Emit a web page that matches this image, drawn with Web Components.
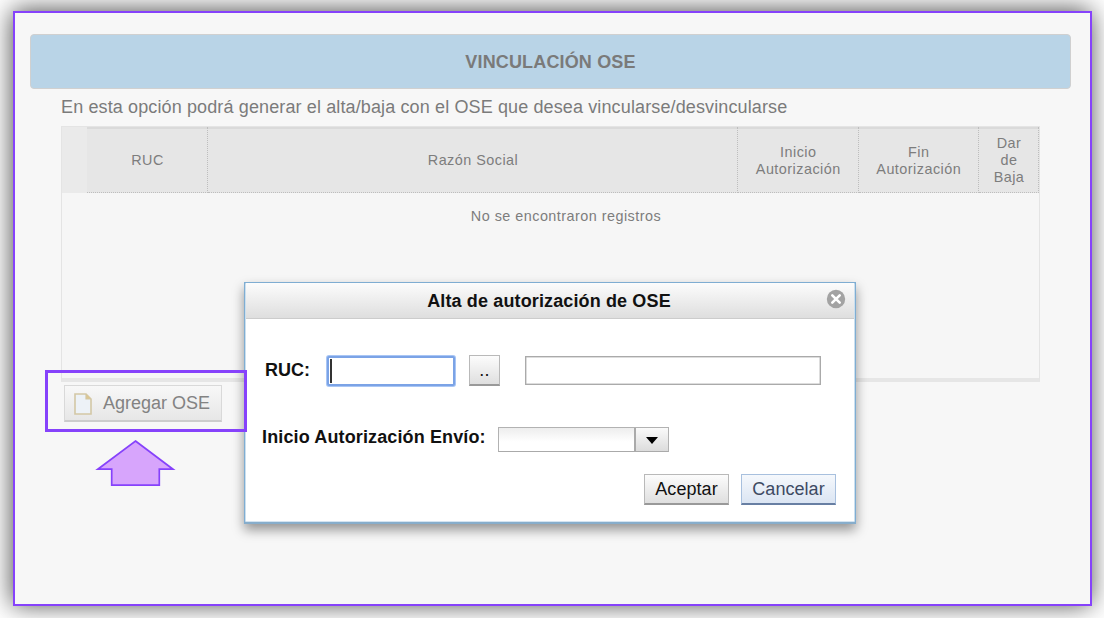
<!DOCTYPE html>
<html lang="es">
<head>
<meta charset="utf-8">
<title>Vinculación OSE</title>
<style>
html,body{margin:0;width:1104px;height:618px;overflow:hidden;background:#fff;font-family:"Liberation Sans",Arial,sans-serif}
</style>
</head>
<body>
<ose-page></ose-page>
<script>
const define = (name, html) => {
  const template = document.createElement('template');
  template.innerHTML = html;
  customElements.define(name, class extends HTMLElement {
    constructor() {
      super();
      this.attachShadow({mode: 'open'}).appendChild(template.content.cloneNode(true));
    }
  });
};

define('ose-banner', `
<style>
:host{display:flex;align-items:center;justify-content:center;box-sizing:border-box;width:1041px;height:55px;border:1px solid #d0d0d0;border-radius:4px;background:#b9d4e7;color:#7a7a7a;font-weight:bold;font-size:18px;letter-spacing:.15px;padding-top:1px}
</style><slot></slot>`);

define('ose-table', `
<style>
:host{display:block;box-sizing:border-box;width:979px;height:256px;border:1px solid #e4e4e4;border-bottom:4px solid #e6e6e6;background:#f6f6f6;color:#7d7d7d;font-size:14.4px;letter-spacing:.47px;line-height:16.7px}
.head{display:grid;grid-template-columns:25px 121px 530px 120.5px 120.5px 60px;height:66px;background:#eaeaea}
.head div{box-sizing:border-box;display:flex;align-items:center;justify-content:center;text-align:center;background:#e6e6e6;border:0 dotted #bdbdbd;border-width:0 1px 1px 0;box-shadow:inset 0 2px #dadada;padding:2px 0 0 1px}
.head div:first-child{background:#eaeaea;border:0;box-shadow:none}
.empty{padding:15px 0 0 31px;text-align:center}
</style>
<div class="head"><div></div><div>RUC</div><div>Razón Social</div><div>Inicio<br>Autorización</div><div>Fin<br>Autorización</div><div>Dar<br>de<br>Baja</div></div>
<div class="empty"><slot></slot></div>`);

define('ose-add', `
<style>
:host{display:flex;align-items:center;box-sizing:border-box;width:158px;height:37px;padding-left:9px;gap:11px;border:1px solid #d9d9d9;border-bottom:2px solid #ccc;background:linear-gradient(#f8f8f8,#e7e7e7);color:#828282;font-size:18px}
svg{display:block;flex:none;margin-top:1px}
span{padding-top:1px}
</style>
<svg width="18" height="22" viewBox="0 0 18 22"><path d="M1 1h11l5 5v15H1z" fill="#edf2f7" stroke="#d3c7a5" stroke-width="1.6"/><path d="M12 1v5h5" fill="#ddc791" stroke="#d3c7a5" stroke-width="1.2"/></svg>
<span><slot></slot></span>`);

define('ose-button', `
<style>
:host{display:flex;align-items:center;justify-content:center;box-sizing:border-box;height:31px;border:1px solid #b9b9b9;border-bottom:2px solid #999;background:linear-gradient(#fcfcfc,#dfdfdf);color:#111;font-size:18px;padding-top:1px}
:host([primary]){border-color:#a8c0de;border-bottom-color:#687fa3;background:linear-gradient(#f5f8fc,#dbe5f3);color:#3d4a63}
</style><slot></slot>`);

define('ose-input', `
<style>
:host{display:block;box-sizing:border-box;height:29px;border:1px solid #aaa;box-shadow:inset 0 0 0 .5px #bbb;background:#fff}
:host([focused]){height:30px;border:2px solid #7ba3e6;border-radius:2px;box-shadow:0 0 0 1px #a9c6f5;padding:1px 0 0 1px}
i{display:none}
:host([focused]) i{display:block;width:2px;height:24px;background:#333}
</style><i></i>`);

define('ose-combo', `
<style>
:host{display:flex;box-sizing:border-box;width:171px;height:25px;border:1px solid #b2b2b2;border-bottom-color:#aaa;background:linear-gradient(#ededed,#fff 60%)}
div{margin-left:auto;width:34px;box-sizing:border-box;border-left:2px solid #aaa;background:linear-gradient(#fafafa,#dcdcdc);display:flex;align-items:center;justify-content:center;padding:2px 1px 0 0}
svg{display:block}
</style><div><svg width="12" height="7"><path d="M0 0h12L6 7z"/></svg></div>`);

define('ose-dialog', `
<style>
:host{display:flex;flex-direction:column;box-sizing:border-box;width:612px;height:242px;border:1px solid #7fadd2;border-bottom:2px solid #87adcb;background:#fff;box-shadow:inset 0 0 0 .6px #a9cae3,0 6px 11px rgba(0,0,0,.4);color:#111;font-size:18px;font-weight:bold;letter-spacing:.13px}
header{display:flex;box-sizing:border-box;height:36px;margin:0 1px;border-bottom:1px solid #ccc;background:linear-gradient(#fcfcfc,#dedede);align-items:center;padding:1px 8px 0 26px}
h2{font:inherit;flex:1;text-align:center;margin:0}
header svg{display:block;margin-top:-5px}
.row{display:flex;align-items:flex-start}
.ruc{padding:37px 0 0 20px;height:71px;box-sizing:border-box}
.ruc span{width:62px;padding-top:4px;letter-spacing:0}
.date{padding:37px 0 0 17px;height:84px;box-sizing:border-box}
.date span{width:236px}
.actions{justify-content:flex-end;gap:12px;padding-right:19px;font-weight:normal;letter-spacing:.05px}
</style>
<header><h2>Alta de autorización de OSE</h2><svg width="20" height="20" viewBox="0 0 20 20"><circle cx="10" cy="10" r="9.2" fill="#a3a3a3"/><path d="M6.3 6.3l7.4 7.4m0-7.4l-7.4 7.4" stroke="#fff" stroke-width="2.6" stroke-linecap="round"/></svg></header>
<div class="row ruc"><span>RUC:</span><ose-input focused style="width:128px"></ose-input><ose-button style="width:31px;margin:-1px 25px 0 14px;font-weight:normal">..</ose-button><ose-input style="width:296px"></ose-input></div>
<div class="row date"><span>Inicio Autorización Envío:</span><ose-combo></ose-combo></div>
<div class="row actions"><ose-button style="width:85px">Aceptar</ose-button><ose-button primary style="width:95px">Cancelar</ose-button></div>`);

define('ose-callout', `
<style>
:host{display:block;width:202px}
.box{box-sizing:border-box;width:202px;height:62px;border:3px solid #8642fb}
svg{display:block;margin:7px 0 0 50px}
</style>
<div class="box"></div>
<svg width="81" height="50" viewBox="0 0 81 50"><path d="M40.5 2L78 30.2H64.3V46.2H16.7V30.2H2.8Z" fill="#d7a5fc" stroke="#8642fb" stroke-width="1.7"/></svg>`);

define('ose-page', `
<style>
:host{display:block;position:relative;box-sizing:border-box;width:1104px;height:618px;padding:11px 0 0 13px;overflow:hidden}
main{display:flex;flex-direction:column;align-items:flex-start;box-sizing:border-box;width:1079px;height:595px;border:2px solid #8642fb;background:#f7f7f7;box-shadow:-1px -1px 24px 0 rgba(0,0,0,.7);padding:21px 0 0 15px}
p{margin:7px 0 0 31px;height:30px;line-height:22px;font-size:18px;letter-spacing:.125px;color:#7b7b7b;white-space:nowrap}
ose-table{margin-left:31px}
ose-add{margin:3px 0 0 34px}
ose-dialog{position:absolute;left:244px;top:282px}
ose-callout{position:absolute;left:45px;top:370px}
</style>
<main>
<ose-banner>VINCULACIÓN OSE</ose-banner>
<p>En esta opción podrá generar el alta/baja con el OSE que desea vincularse/desvincularse</p>
<ose-table>No se encontraron registros</ose-table>
<ose-add>Agregar OSE</ose-add>
</main>
<ose-dialog></ose-dialog>
<ose-callout></ose-callout>`);
</script>
</body>
</html>
